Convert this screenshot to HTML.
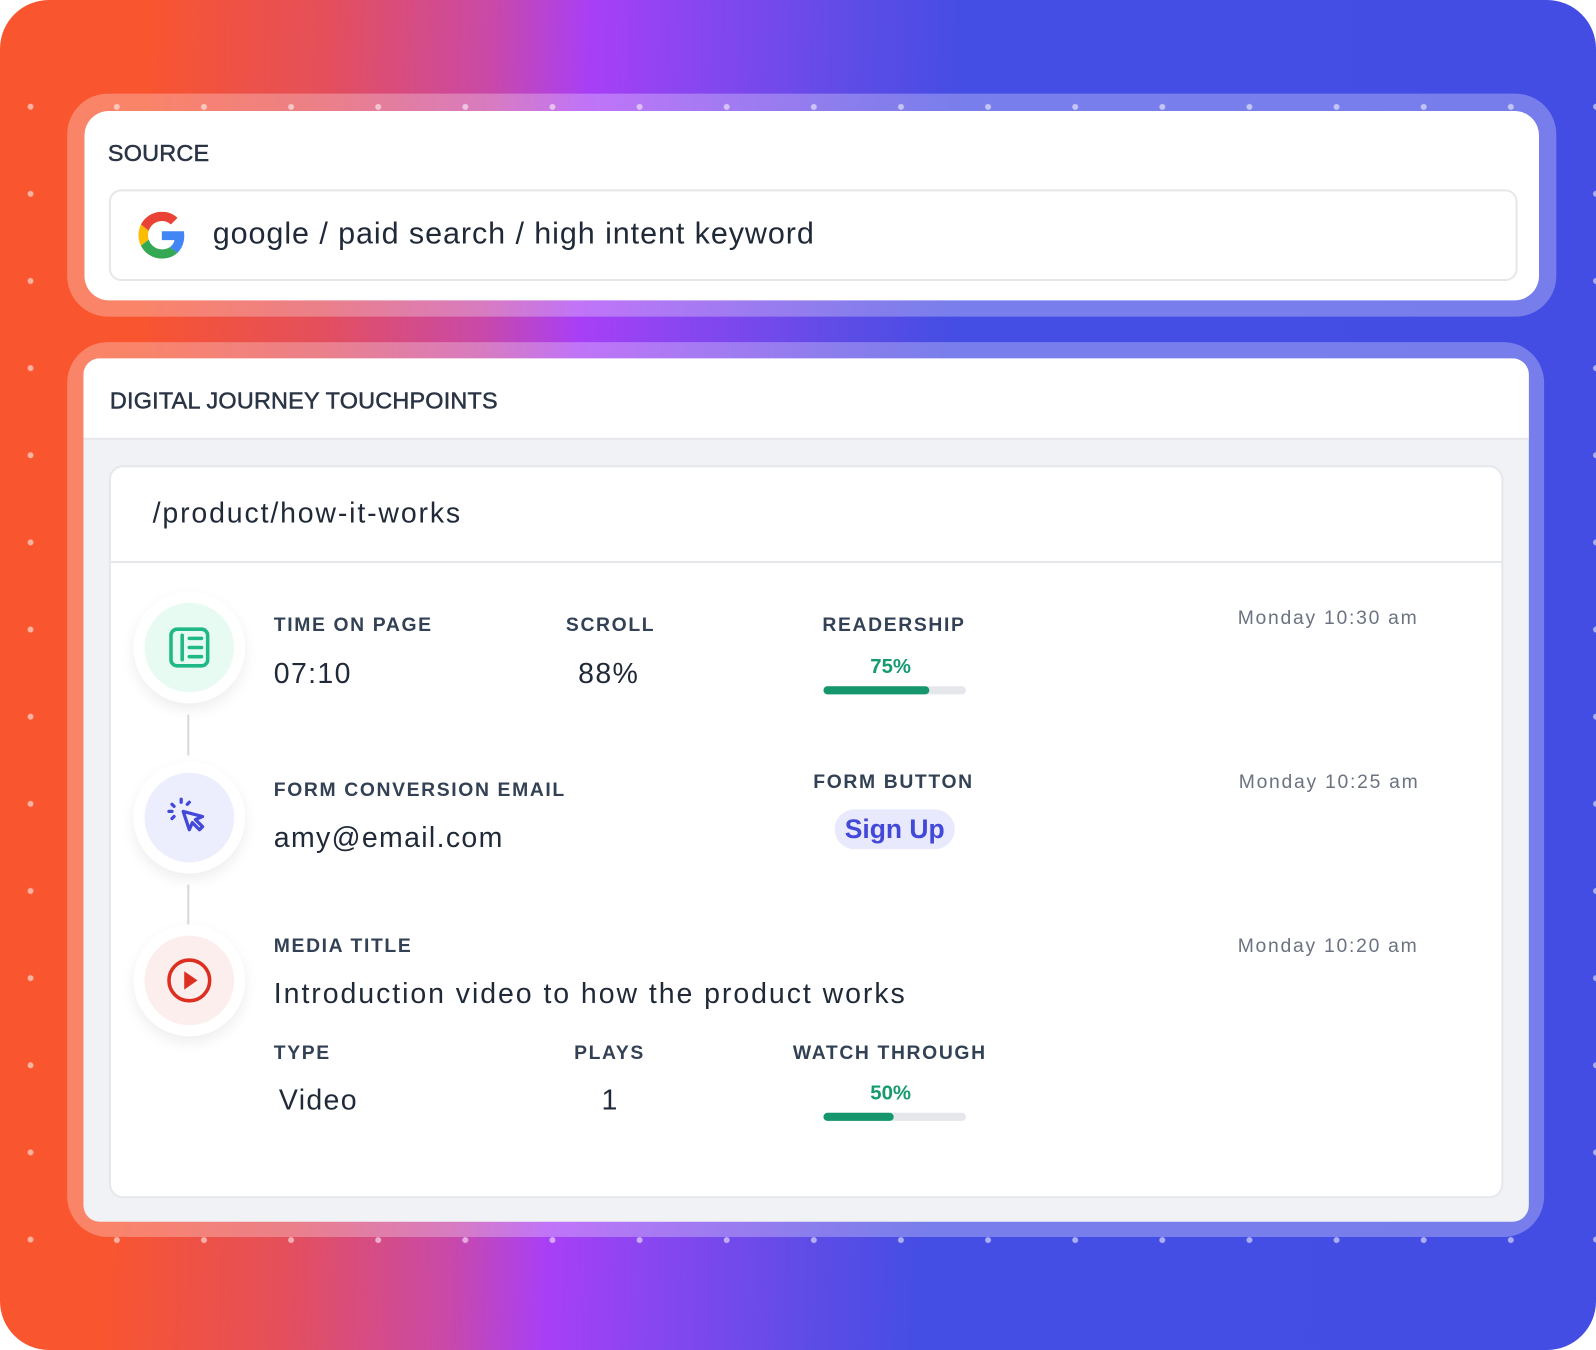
<!DOCTYPE html>
<html><head><meta charset="utf-8"><style>
*{margin:0;padding:0;box-sizing:border-box}
html,body{width:1596px;height:1350px;overflow:hidden;background:#fff}
body{font-family:"Liberation Sans",Arial,sans-serif;color:#1f2937}
#w{position:absolute;left:0;top:0;width:1568px;height:1326px;transform:scale(1.01786,1.0181);transform-origin:0 0}
.bg{position:absolute;inset:0;border-radius:48px;background:linear-gradient(92deg,#f9552f 0%,#f9552f 9%,#e44f5b 20%,#c949a8 30%,#a83ff6 36%,#8a46f0 42%,#5e4ce6 52%,#444de4 59%,#434de4 100%)}
.dots{position:absolute;background:radial-gradient(circle,rgba(255,255,255,.55) 2.6px,transparent 3.2px);}
.frame{position:absolute;border-radius:40px;background:rgba(255,255,255,.28)}
.card{position:absolute;background:#fff}
.abs{position:absolute;white-space:nowrap}
.hd{font-size:23px;color:#2b3445;-webkit-text-stroke:0.5px #2b3445;letter-spacing:0.2px}
.lbl{font-size:19px;font-weight:700;letter-spacing:1.6px;color:#334155}
.val{font-size:28px;color:#1f2937;letter-spacing:1.3px}
.date{font-size:19px;color:#6b7280;letter-spacing:1.7px}
.pct{font-size:20px;font-weight:700;color:#169a6f}
.bar{position:absolute;height:8px;border-radius:4px;background:#e5e7eb;width:140px}
.bar i{display:block;height:8px;border-radius:4px;background:#15966c}
.circ{position:absolute;width:110px;height:110px;border-radius:50%;background:#fff;box-shadow:0 6px 14px rgba(0,0,0,.07)}
.circ .in{position:absolute;left:11px;top:11px;width:88px;height:88px;border-radius:50%;display:flex;align-items:center;justify-content:center}
.line{position:absolute;left:184px;width:2px;background:#d6d9de}
</style></head><body><div id="w">
<div class="bg"></div>
<div class="dots" style="left:27px;top:62px;width:6px;height:1200px;background-size:6px 85.6px"></div>
<div class="dots" style="left:72px;top:102px;width:1456px;height:6px;background-size:85.6px 6px;background-position:0 0"></div>
<div class="dots" style="left:72px;top:1215px;width:1456px;height:6px;background-size:85.6px 6px"></div>
<div class="dots" style="left:1565px;top:62px;width:6px;height:1200px;background-size:6px 85.6px"></div>

<div class="frame" style="left:66px;top:92px;width:1463px;height:219px"></div>
<div class="card" style="left:83px;top:109px;width:1429px;height:186px;border-radius:24px"></div>
<div class="abs hd" style="left:106px;top:137px">SOURCE</div>
<div class="abs" style="left:107px;top:186px;width:1384px;height:90px;border:2px solid #e6e7ea;border-radius:12px"></div>
<svg class="abs" style="left:136px;top:208px" width="46" height="46" viewBox="0 0 48 48"><path fill="#EA4335" d="M24 9.5c3.54 0 6.710 1.22 9.21 3.6l6.850-6.85C35.9 2.38 30.47 0 24 0 14.62 0 6.510 5.38 2.56 13.22l7.980 6.19C12.43 13.72 17.74 9.5 24 9.5z"/><path fill="#4285F4" d="M46.98 24.55c0-1.57-.15-3.09-.38-4.550H24v9.020h12.94c-.58 2.96-2.26 5.48-4.78 7.18l7.730 6c4.51-4.18 7.09-10.36 7.09-17.65z"/><path fill="#FBBC05" d="M10.53 28.59c-.48-1.45-.76-2.99-.76-4.59s.27-3.14.76-4.59l-7.98-6.19C.92 16.46 0 20.12 0 24c0 3.88.92 7.54 2.56 10.78l7.970-6.19z"/><path fill="#34A853" d="M24 48c6.48 0 11.93-2.13 15.89-5.81l-7.73-6c-2.15 1.45-4.92 2.3-8.16 2.3-6.26 0-11.57-4.22-13.47-9.91l-7.98 6.19C6.51 42.62 14.62 48 24 48z"/></svg>
<div class="abs" style="left:209px;top:213px;font-size:30px;color:#1f2937;letter-spacing:0.9px">google / paid search / high intent keyword</div>

<div class="frame" style="left:66px;top:336px;width:1451px;height:879px"></div>
<div class="card" style="left:82px;top:352px;width:1420px;height:848px;border-radius:16px;background:#f0f2f5;overflow:hidden">
  <div style="height:80px;background:#fff;border-bottom:2px solid #e5e7eb"></div>
</div>
<div class="abs hd" style="left:108px;top:380px">DIGITAL JOURNEY TOUCHPOINTS</div>
<div class="card" style="left:107px;top:457px;width:1370px;height:720px;border:2px solid #e5e7eb;border-radius:14px"></div>
<div class="abs" style="left:109px;top:551px;width:1366px;height:2px;background:#e5e7eb"></div>
<div class="abs" style="left:150px;top:488px;font-size:28px;color:#1f2937;letter-spacing:1.8px">/product/how-it-works</div>

<div class="line" style="top:702px;height:40px"></div>
<div class="line" style="top:869px;height:41px"></div>
<div class="circ" style="left:131px;top:581px"><div class="in" style="background:#e8fbf3">
<svg width="44" height="44" viewBox="0 0 44 44" fill="none" stroke="#1fb886" stroke-width="3.5" stroke-linecap="round"><rect x="4" y="4" width="36" height="36" rx="6"/><path d="M15 10v24M22 13h12M22 22h12M22 31h12"/></svg></div></div>
<div class="circ" style="left:131px;top:748px"><div class="in" style="background:#ecedfd">
<svg width="46" height="46" viewBox="0 0 46 46" fill="none" stroke="#4248d8" stroke-width="3.2" stroke-linecap="round" stroke-linejoin="round"><path d="M17 17l6 18 3-7 7 7 3-3-7-7 7-3z"/><path d="M15 5v3M6 10l2 2M23 8l-2 2M3 17h3M6 24l2-2"/></svg></div></div>
<div class="circ" style="left:131px;top:908px"><div class="in" style="background:#fdeeee">
<svg width="48" height="48" viewBox="0 0 48 48"><circle cx="24" cy="24" r="20" fill="none" stroke="#dc2f22" stroke-width="3.5"/><path d="M19 15v18l13-9z" fill="#dc2f22"/></svg></div></div>

<div class="abs lbl" style="left:269px;top:604px">TIME ON PAGE</div>
<div class="abs lbl" style="left:556px;top:604px">SCROLL</div>
<div class="abs lbl" style="left:808px;top:604px">READERSHIP</div>
<div class="abs val" style="left:269px;top:646px">07:10</div>
<div class="abs val" style="left:568px;top:646px">88%</div>
<div class="abs pct" style="left:855px;top:644px">75%</div>
<div class="bar" style="left:809px;top:674px"><i style="width:104px"></i></div>
<div class="abs date" style="left:1216px;top:597px">Monday 10:30 am</div>

<div class="abs lbl" style="left:269px;top:766px">FORM CONVERSION EMAIL</div>
<div class="abs val" style="left:269px;top:807px">amy@email.com</div>
<div class="abs lbl" style="left:799px;top:758px">FORM BUTTON</div>
<div class="abs" style="left:820px;top:795px;width:118px;height:39px;border-radius:20px;background:#e8e9fc;color:#4248d8;font-size:26px;font-weight:600;text-align:center;line-height:39px">Sign Up</div>
<div class="abs date" style="left:1217px;top:758px">Monday 10:25 am</div>

<div class="abs lbl" style="left:269px;top:919px">MEDIA TITLE</div>
<div class="abs val" style="left:269px;top:960px;letter-spacing:1.9px">Introduction video to how the product works</div>
<div class="abs date" style="left:1216px;top:919px">Monday 10:20 am</div>
<div class="abs lbl" style="left:269px;top:1024px">TYPE</div>
<div class="abs lbl" style="left:564px;top:1024px">PLAYS</div>
<div class="abs lbl" style="left:779px;top:1024px">WATCH THROUGH</div>
<div class="abs val" style="left:274px;top:1065px">Video</div>
<div class="abs val" style="left:591px;top:1065px">1</div>
<div class="abs pct" style="left:855px;top:1063px">50%</div>
<div class="bar" style="left:809px;top:1093px"><i style="width:69px"></i></div>
</div></body></html>
